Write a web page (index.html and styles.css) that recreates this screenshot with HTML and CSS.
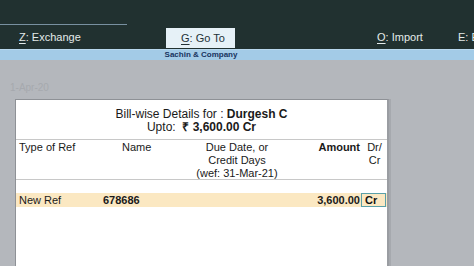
FILE: index.html
```html
<!DOCTYPE html>
<html lang="en">
	<head>
		<meta charset="UTF-8">
		<title>Bill-wise Details</title>
		<link rel="stylesheet" href="styles.css">
	</head>
	<body>
		<div class="topbar">
			<div class="topline"></div>
			<div class="menu">
				<div class="key"><u>Z</u>: Exchange</div>
				<div class="key goto"><u>G</u>: Go To</div>
				<div></div>
				<div class="key"><u>O</u>: Import</div>
				<div class="key last"><u>E</u>: Export</div>
			</div>
		</div>
		<div class="company"><span>Sachin &amp; Company</span></div>
		<div class="main">
			<div class="date">1-Apr-20</div>
			<div class="panel">
				<div class="title">
					<div>Bill-wise Details for : <b>Durgesh C</b></div>
					<div>Upto:&nbsp; <b>₹ 3,600.00 Cr</b></div>
				</div>
				<div class="cols head">
					<div>Type of Ref</div>
					<div class="name">Name</div>
					<div class="due">Due Date, or<br>Credit Days<br>(wef: 31-Mar-21)</div>
					<div class="amount"><b>Amount</b></div>
					<div class="drcr">Dr/<br>Cr</div>
				</div>
				<div class="cols row">
					<div>New Ref</div>
					<div><b>678686</b></div>
					<div></div>
					<div class="amount"><b>3,600.00</b></div>
					<div class="crbox"><b>Cr</b></div>
				</div>
			</div>
		</div>
	</body>
</html>
```
FILE: styles.css
```css
html, body {
	margin: 0px;
	padding: 0px;
	height: 100%;
	overflow: hidden;
	font-family: "Liberation Sans", Arial, sans-serif;
}
body {
	display: flex;
	flex-direction: column;
	background-color: #b4b7bc;
}
.topbar {
	height: 49px;
	background-color: #213130;
	color: #e4ebea;
	font-size: 11px;
}
.topline {
	width: 127px;
	height: 24px;
	border-bottom: 1px solid #7890a0;
}
.menu {
	display: grid;
	grid-template-columns: 147px 69px 142px 81px 1fr;
	padding-left: 19px;
	height: 24px;
	align-items: center;
	white-space: nowrap;
}
.key u {
	text-underline-offset: 2px;
}
.last {
	overflow: hidden;
}
.goto {
	height: 20px;
	line-height: 20px;
	margin-top: 2px;
	background-color: #e6f1f7;
	color: #243238;
	padding-left: 15px;
	box-sizing: border-box;
}
.company {
	height: 11px;
	background-color: #a3cbe7;
	border-top: 1px solid #b8d8ee;
	box-sizing: border-box;
	font-size: 8px;
	font-weight: bold;
	line-height: 10px;
	color: #17335f;
	padding-left: 131px;
}
.company span {
	display: block;
	width: 140px;
	text-align: center;
}
.main {
	flex: 1;
	display: flex;
	flex-direction: column;
	padding: 22px 0px 0px 0px;
}
.date {
	height: 17px;
	padding-left: 10px;
	font-size: 10px;
	color: #a6a9ae;
}
.panel {
	flex: 1;
	margin-left: 15px;
	width: 371px;
	background-color: #fff;
	border-left: 1px solid #8e9196;
	border-top: 1px solid #8e9196;
	border-right: 2px solid #9a9da2;
	box-shadow: 2px 0px 0px #a6a9ae;
	font-size: 11px;
	color: #1a1a1a;
}
.title {
	height: 40px;
	padding-top: 8px;
	box-sizing: border-box;
	border-bottom: 1px solid #c8c8c8;
	text-align: center;
	font-size: 12px;
	line-height: 13px;
}
.cols {
	display: grid;
	grid-template-columns: 84px 87px 94px 77px 25px;
	padding-left: 3px;
	line-height: 13px;
}
.head {
	height: 40px;
	box-sizing: border-box;
	border-bottom: 1px solid #c8c8c8;
	padding-top: 1px;
}
.head .name {
	padding-left: 19px;
}
.due {
	text-align: center;
}
.amount {
	text-align: right;
	padding-right: 1px;
}
.drcr {
	text-align: center;
	padding-left: 2px;
}
.row {
	margin-top: 13px;
	height: 14px;
	line-height: 14px;
	background-color: #fbe8c2;
}
.crbox {
	border: 1px solid #5aa0a8;
	box-sizing: border-box;
	padding-left: 3px;
	line-height: 12px;
	color: #111;
}
```
